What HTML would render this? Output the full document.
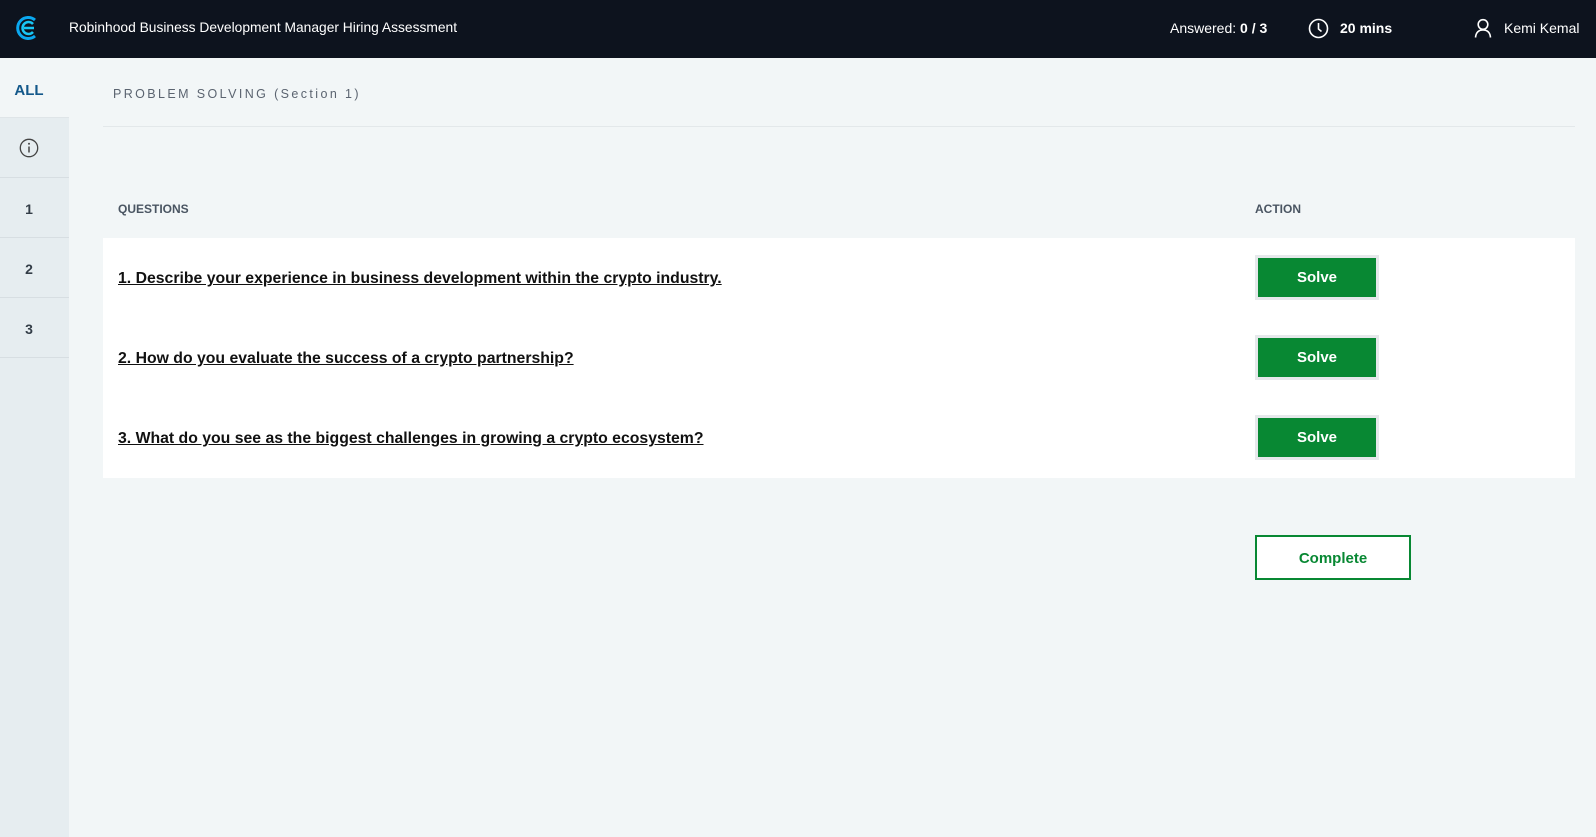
<!DOCTYPE html>
<html><head><style>
*{margin:0;padding:0;box-sizing:border-box}
body{width:1596px;height:837px;background:#f2f6f7;font-family:"Liberation Sans",sans-serif;position:relative;overflow:hidden}
.hdr{position:absolute;left:0;top:0;width:1596px;height:58px;background:#0d131e;color:#fff;font-size:14px}
.hdr span{position:absolute;top:20px}
.side{position:absolute;left:0;top:58px;width:69px;height:779px;background:#e6edf0}
.si{position:absolute;left:0;width:69px;height:60px;border-bottom:1px solid #d7dee2;font-weight:bold;font-size:14px;color:#333d47;line-height:62px}
.si .c{position:absolute;left:0;width:58px;text-align:center}
.q{position:absolute;left:118px;font-size:15.8px;font-weight:bold;color:#111;text-decoration:underline}
.solve{position:absolute;left:1255px;width:124px;height:45px;background:#088833;border:3px solid #e6e8eb;color:#fff;font-weight:bold;font-size:15px;text-align:center;line-height:40px}
</style></head><body>
<div class="hdr">
<svg style="position:absolute;left:15px;top:14px" width="25" height="28" viewBox="0 0 25 28"><path d="M20 6A10.5 10.5 0 1 0 20 22" fill="none" stroke="#0aa8f0" stroke-width="3"/><path d="M18 10A6 6 0 1 0 18 18" fill="none" stroke="#19c6f5" stroke-width="2.5"/><path d="M9 14H19" stroke="#19c6f5" stroke-width="2.5"/></svg>
<span style="left:69px;font-size:13.8px">Robinhood Business Development Manager Hiring Assessment</span>
<span style="left:1170px">Answered: <b>0 / 3</b></span>
<svg style="position:absolute;left:1308px;top:18px" width="21" height="21" viewBox="0 0 21 21"><circle cx="10.5" cy="10.5" r="9" fill="none" stroke="#fff" stroke-width="1.6"/><path d="M10.5 5V11L13.5 13.5" fill="none" stroke="#fff" stroke-width="1.6"/></svg>
<span style="left:1340px;font-weight:bold">20 mins</span>
<svg style="position:absolute;left:1474px;top:18px" width="18" height="20" viewBox="0 0 18 20"><circle cx="9" cy="6.5" r="4.8" fill="none" stroke="#fff" stroke-width="1.6"/><path d="M1.5 19.5C2 14 5 12 9 12S16 14 16.5 19.5" fill="none" stroke="#fff" stroke-width="1.6"/></svg>
<span style="left:1504px">Kemi Kemal</span>
</div>
<div class="side">
<div class="si" style="top:0;background:#f2f6f7;color:#13588a;font-size:15px;border-bottom:1px solid #dfe5e8;line-height:66px"><span class="c">ALL</span></div>
<div class="si" style="top:60px"><svg style="position:absolute;left:19px;top:20px" width="20" height="20" viewBox="0 0 20 20"><circle cx="10" cy="10" r="8.7" fill="none" stroke="#444" stroke-width="1.3"/><path d="M10 8.5V14.5" stroke="#444" stroke-width="1.5"/><circle cx="10" cy="5.8" r="1" fill="#444"/></svg></div>
<div class="si" style="top:120px"><span class="c">1</span></div>
<div class="si" style="top:180px"><span class="c">2</span></div>
<div class="si" style="top:240px"><span class="c">3</span></div>
</div>
<div style="position:absolute;left:113px;top:87px;font-size:12.5px;letter-spacing:2.4px;color:#5b6470">PROBLEM SOLVING (Section 1)</div>
<div style="position:absolute;left:103px;top:126px;width:1472px;height:1px;background:#e3e8ea"></div>
<div style="position:absolute;left:118px;top:202px;font-size:12px;font-weight:bold;color:#4a5562">QUESTIONS</div>
<div style="position:absolute;left:1255px;top:202px;font-size:12px;font-weight:bold;color:#4a5562">ACTION</div>
<div style="position:absolute;left:103px;top:238px;width:1472px;height:240px;background:#fff"></div>
<div class="q" style="top:270px">1. Describe your experience in business development within the crypto industry.</div>
<div class="q" style="top:350px">2. How do you evaluate the success of a crypto partnership?</div>
<div class="q" style="top:430px">3. What do you see as the biggest challenges in growing a crypto ecosystem?</div>
<div class="solve" style="top:255px">Solve</div>
<div class="solve" style="top:335px">Solve</div>
<div class="solve" style="top:415px">Solve</div>
<div style="position:absolute;left:1255px;top:535px;width:156px;height:45px;border:2px solid #088833;background:#fff;color:#088833;font-weight:bold;font-size:15px;text-align:center;line-height:43px">Complete</div>
</body></html>
